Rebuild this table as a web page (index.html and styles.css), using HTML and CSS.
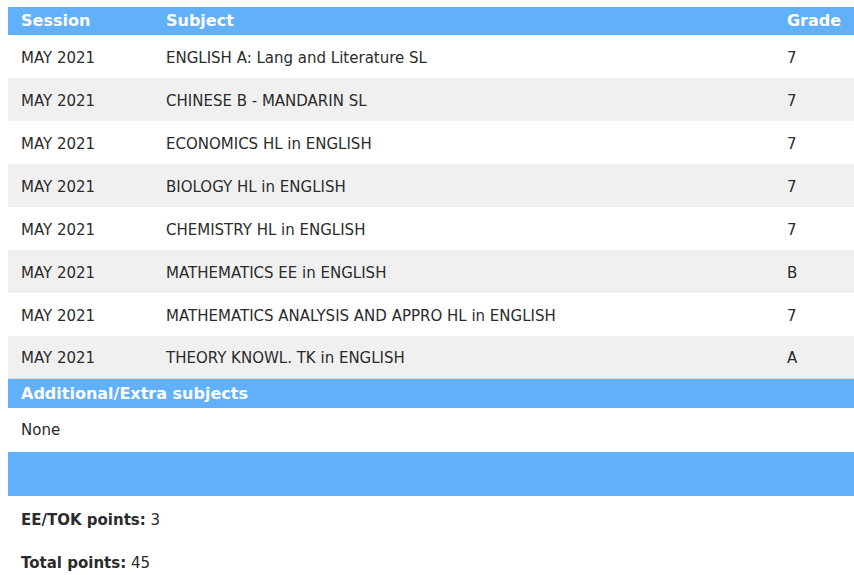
FILE: index.html
```html
<!DOCTYPE html>
<html>
<head>
    <title>Results</title>
    <link rel="stylesheet" href="styles.css">
</head>
<body>
    <div class="results">
        <table class="grades">
            <tr class="head">
                <th class="col-session">Session</th>
                <th class="col-subject">Subject</th>
                <th class="col-grade">Grade</th>
            </tr>
            <tr>
                <td>MAY 2021</td>
                <td>ENGLISH A: Lang and Literature SL</td>
                <td>7</td>
            </tr>
            <tr>
                <td>MAY 2021</td>
                <td>CHINESE B - MANDARIN SL</td>
                <td>7</td>
            </tr>
            <tr>
                <td>MAY 2021</td>
                <td>ECONOMICS HL in ENGLISH</td>
                <td>7</td>
            </tr>
            <tr>
                <td>MAY 2021</td>
                <td>BIOLOGY HL in ENGLISH</td>
                <td>7</td>
            </tr>
            <tr>
                <td>MAY 2021</td>
                <td>CHEMISTRY HL in ENGLISH</td>
                <td>7</td>
            </tr>
            <tr>
                <td>MAY 2021</td>
                <td>MATHEMATICS EE in ENGLISH</td>
                <td>B</td>
            </tr>
            <tr>
                <td>MAY 2021</td>
                <td>MATHEMATICS ANALYSIS AND APPRO HL in ENGLISH</td>
                <td>7</td>
            </tr>
            <tr class="last">
                <td>MAY 2021</td>
                <td>THEORY KNOWL. TK in ENGLISH</td>
                <td>A</td>
            </tr>
        </table>

        <div class="band">Additional/Extra subjects</div>
        <div class="plain">None</div>
        <div class="band tall"></div>

        <div class="points"><strong>EE/TOK points:</strong> 3</div>
        <div class="points"><strong>Total points:</strong> 45</div>
    </div>
</body>
</html>
```

FILE: styles.css
```css
body {
    font-family: 'DejaVu Sans', Verdana, sans-serif;
    margin: 0;
    padding: 7px 0 0 8px;
    color: #2b2b2b;
    background: #fff;
    font-size: 15px;
}
.results {
    width: 846px;
}
.grades {
    width: 100%;
    border-collapse: collapse;
}
.grades th {
    background-color: #61b0fa;
    color: #fff;
    font-size: 16px;
    font-weight: bold;
    text-align: left;
    height: 28px;
    padding: 0 13px;
    line-height: 26px;
}
.grades td {
    box-sizing: border-box;
    height: 43px;
    padding: 2px 13px 0;
    vertical-align: middle;
    line-height: 20px;
}
.grades tr:nth-child(odd) td {
    background-color: #f0f0f0;
}
.grades tr.last td {
    height: 42px;
    border-bottom: 1px solid #dcdcdc;
}
.col-session {
    width: 119px;
}
.col-grade {
    width: 54px;
}
.band {
    background-color: #61b0fa;
    color: #fff;
    font-size: 16px;
    font-weight: bold;
    height: 29px;
    line-height: 29px;
    padding: 0 13px;
}
.band.tall {
    height: 44px;
}
.plain {
    height: 44px;
    line-height: 45px;
    padding: 0 13px;
}
.points {
    height: 43px;
    line-height: 48px;
    padding: 0 13px;
}
```
